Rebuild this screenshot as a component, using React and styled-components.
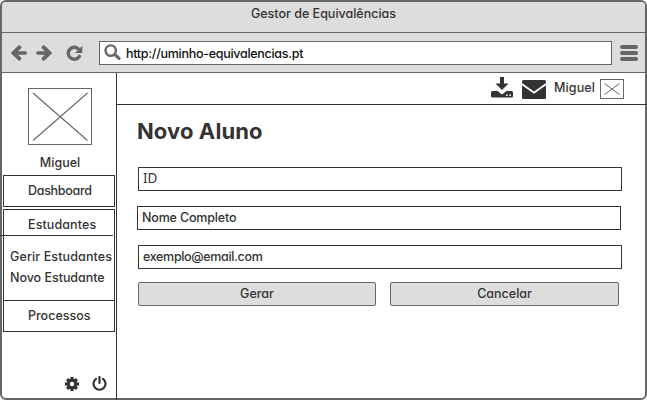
import React from 'react';
import styled, { createGlobalStyle } from 'styled-components';

const ink = '#333';
const grey = '#666';
const panel = '#ddd';

const Global = createGlobalStyle`
  *, *::before, *::after { box-sizing: border-box; }
  body { margin: 0; background: #fff; overflow: hidden; }
  svg { display: block; flex: none; }
`;

const Browser = styled.div`
  width: 647px;
  height: 400px;
  display: flex;
  flex-direction: column;
  border: 2px solid ${grey};
  border-radius: 6px;
  background: #fff;
  color: ${ink};
  font: 450 12.5px/18px Inter, "Liberation Sans", sans-serif;
  font-feature-settings: "cv11";
`;

const Text = styled.span`
  letter-spacing: ${(p) => p.$track || 0}px;
  white-space: nowrap;
`;

const TitleBar = styled.header`
  height: 31px;
  padding-top: 3px;
  text-align: center;
  background: ${panel};
  border-bottom: 1px solid ${grey};
  border-radius: 4px 4px 0 0;
`;

const Toolbar = styled.nav`
  height: 40px;
  display: flex;
  align-items: center;
  padding: 0 7px 0 9px;
  background: ${panel};
  border-bottom: 1px solid ${grey};
`;

const NavIcons = styled.div`
  width: 88px;
  display: flex;
  align-items: center;
  gap: 9px;
  svg:last-child { margin-left: 5px; }
`;

const Address = styled.div`
  width: 513px;
  height: 24px;
  margin-top: 1px;
  display: flex;
  align-items: flex-start;
  gap: 5px;
  padding: 3px 4px 0;
  background: #fff;
  border: 1px solid ${grey};
  color: #111;
  svg { margin-top: -1px; }
`;

const MenuIcon = styled.div`
  width: 18px;
  margin: 1px 0 0 auto;
  display: grid;
  gap: 2px;
`;

const MenuBar = styled.i`
  height: 4px;
  border-radius: 2px;
  background: ${grey};
`;

const Body = styled.div`
  flex: 1;
  display: flex;
  margin: 0 -2px -2px 0;
`;

const Sidebar = styled.aside`
  width: 115px;
  display: flex;
  flex-direction: column;
  border-right: 1px solid ${ink};
  padding: 15px 0 9px 1px;
`;

const Picture = styled.svg`
  border: 1px solid ${grey};
`;

const Profile = styled.div`
  width: 114px;
  display: grid;
  justify-items: center;
  row-gap: 9px;
  margin-bottom: 3px;
`;

const MenuItem = styled.div`
  width: 112px;
  height: 32px;
  display: flex;
  padding: 6px 0 0 24px;
  border: 1px solid ${ink};
  margin-bottom: 2px;
`;

const MenuGroup = styled.div`
  width: 112px;
  height: 123px;
  display: flex;
  flex-direction: column;
  border: 1px solid ${ink};
`;

const GroupTitle = styled.div`
  height: 25px;
  padding: 6px 0 0 24px;
`;

const SubMenu = styled.div`
  width: 113px;
  height: 65px;
  margin-left: -4px;
  padding: 12px 0 0 10px;
  display: grid;
  grid-auto-rows: 21px;
  border-top: 1px solid ${ink};
`;

const GroupEnd = styled.div`
  border-top: 1px solid ${ink};
  padding: 6px 0 0 24px;
`;

const SideActions = styled.div`
  margin-top: auto;
  display: flex;
  align-items: flex-end;
  gap: 13px;
  padding-left: 62px;
`;

const Main = styled.main`
  flex: 1;
  display: flex;
  flex-direction: column;
`;

const UserBar = styled.div`
  height: 32px;
  display: flex;
  align-items: center;
  justify-content: flex-end;
  padding: 0 23px 0 0;
  border-bottom: 1px solid ${ink};
`;

const UserName = styled(Text)`
  margin: -1px 5px 0 8px;
`;

const DownloadIcon = styled.svg`
  margin-top: -3px;
`;

const Mail = styled.svg`
  margin: 2px 0 0 9px;
`;

const Form = styled.form`
  width: 484px;
  margin-left: 21px;
  display: flex;
  flex-direction: column;
`;

const Heading = styled.h1`
  height: 30px;
  margin: 11px 0 21px -1px;
  font-size: 22px;
  line-height: 30px;
  font-weight: 700;
  letter-spacing: 0.1px;
`;

const Field = styled.div`
  width: 484px;
  height: 24px;
  margin: 0 0 15px ${(p) => p.$shift || 0}px;
  padding: ${(p) => p.$top}px 4px 0;
  border: 1px solid ${ink};
`;

const Initials = styled.span`
  display: block;
  font: 400 13.5px/18px "Noto Sans", sans-serif;
`;

const Buttons = styled.div`
  display: flex;
  gap: 14px;
  margin-top: -2px;
`;

const Button = styled.div`
  width: ${(p) => p.$w}px;
  height: 24px;
  padding-top: 2px;
  text-align: center;
  background: ${panel};
  border: 1px solid ${grey};
  border-radius: 2px;
`;

const Arrow = ({ flip }) => (
  <svg width="16" height="16" viewBox="0 0 16 16" fill="none" stroke={grey}>
    <g transform={flip ? 'translate(16 0) scale(-1 1)' : undefined}>
      <path d="M8.3 2.4 2.6 8l5.7 5.6" strokeWidth="4" strokeLinecap="round" />
      <path d="M4 8h10.2" strokeWidth="3.6" strokeLinecap="round" />
    </g>
  </svg>
);

const Reload = () => (
  <svg width="17" height="16" viewBox="0 0 17 16">
    <path d="M13.4 11.4A6 6 0 1 1 12.2 3.7" fill="none" stroke={grey} strokeWidth="3.4" strokeLinecap="round" />
    <path d="M16.3.8v7.200H9z" fill={grey} />
  </svg>
);

const Search = () => (
  <svg width="17" height="16" viewBox="0 0 17 16" fill="none" stroke={grey}>
    <circle cx="6.7" cy="6.6" r="5.2" strokeWidth="2.4" />
    <path d="m11 10.600 4 3.700" strokeWidth="3.2" strokeLinecap="round" />
  </svg>
);

const Placeholder = () => (
  <Picture width="64" height="57" viewBox="0 0 62 55" stroke={grey} strokeWidth="1.1">
    <path d="M4 4 58.500 51.500M58.500 4 4 51.500" />
  </Picture>
);

const SmallPlaceholder = () => (
  <Picture width="24" height="20" viewBox="0 0 22 18" stroke={grey}>
    <path d="M3.500 3.500 18.500 14.500M18.500 3.500 3.500 14.500" />
  </Picture>
);

const Download = () => (
  <DownloadIcon width="22" height="21" viewBox="0 0 22 21" fill={ink}>
    <path d="M9 0h4v6.500h4.500L11 13 4.500 6.500H9z" />
    <path fillRule="evenodd" d="M1.500 14H6.500l4.500 3.500 4.500-3.500h5q1.500 0 1.500 1.500v3.500q0 1.600-1.500 1.600h-19Q0 20.600 0 19V15.500q0-1.500 1.500-1.500zM15 17.400v1.600h1.600v-1.600zm3.300 0v1.600h1.600v-1.600z" />
  </DownloadIcon>
);

const MailIcon = () => (
  <Mail width="24" height="19" viewBox="0 0 24 19" fill={ink}>
    <path d="M1.500 0h21Q24 0 24 1.500V3L12 11.500 0 3V1.500Q0 0 1.500 0z" />
    <path d="m0 5.200 12 8.500 12-8.500v12.300Q24 19 22.500 19h-21Q0 19 0 17.500z" />
  </Mail>
);

const Gear = () => (
  <svg width="14" height="14" viewBox="0 0 14 14" fill="none" stroke={ink}>
    <circle cx="7" cy="7" r="3.8" strokeWidth="3.2" />
    <path d="M7 0v2.500M7 11.500V14M0 7h2.500M11.500 7H14M2.050 2.050l1.800 1.800M10.150 10.150l1.800 1.800M2.050 11.950l1.800-1.800M10.150 3.850l1.800-1.800" strokeWidth="2.9" />
  </svg>
);

const Power = () => (
  <svg width="15" height="15" viewBox="0 0 15 15" fill="none" stroke={ink} strokeWidth="2.2" strokeLinecap="round">
    <path d="M4 2.900A6 6 0 1 0 11 2.900M7.500 1v6" />
  </svg>
);

export default function App() {
  return (
    <Browser>
      <Global />
      <TitleBar><Text>Gestor de Equivalências</Text></TitleBar>
      <Toolbar>
        <NavIcons><Arrow /><Arrow flip /><Reload /></NavIcons>
        <Address>
          <Search />
          <Text $track={-0.28}>http://uminho-equivalencias.pt</Text>
        </Address>
        <MenuIcon><MenuBar /><MenuBar /><MenuBar /></MenuIcon>
      </Toolbar>
      <Body>
        <Sidebar>
          <Profile>
            <Placeholder />
            <Text>Miguel</Text>
          </Profile>
          <MenuItem><Text $track={-0.3}>Dashboard</Text></MenuItem>
          <MenuGroup>
            <GroupTitle><Text $track={0.1}>Estudantes</Text></GroupTitle>
            <SubMenu>
              <Text $track={0.12}>Gerir Estudantes</Text>
              <Text $track={-0.03}>Novo Estudante</Text>
            </SubMenu>
            <GroupEnd><Text>Processos</Text></GroupEnd>
          </MenuGroup>
          <SideActions><Gear /><Power /></SideActions>
        </Sidebar>
        <Main>
          <UserBar>
            <Download />
            <MailIcon />
            <UserName $track={0.1}>Miguel</UserName>
            <SmallPlaceholder />
          </UserBar>
          <Form>
            <Heading>Novo Aluno</Heading>
            <Field $top={1}><Initials>ID</Initials></Field>
            <Field $top={2} $shift={-1}><Text $track={-0.17}>Nome Completo</Text></Field>
            <Field $top={2}><Text $track={-0.33}>exemplo@email.com</Text></Field>
            <Buttons>
              <Button $w={238}><Text>Gerar</Text></Button>
              <Button $w={229}><Text>Cancelar</Text></Button>
            </Buttons>
          </Form>
        </Main>
      </Body>
    </Browser>
  );
}
